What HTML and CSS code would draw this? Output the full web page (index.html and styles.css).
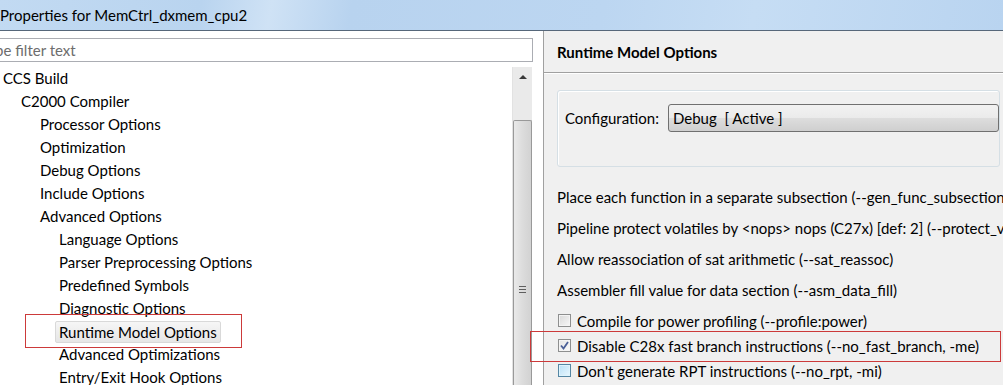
FILE: index.html
```html
<!DOCTYPE html>
<html lang="en">
<head>
    <meta charset="UTF-8">
    <title>Properties for MemCtrl_dxmem_cpu2</title>
    <link rel="stylesheet" href="styles.css">
</head>
<body>
    <div class="window">
        <div class="titlebar">Properties for MemCtrl_dxmem_cpu2</div>

        <div class="content">
            <div class="nav">
                <div class="filter">type filter text</div>

                <div class="tree-wrap">
                    <ul class="tree">
                        <li class="lvl1">CCS Build</li>
                        <li class="lvl2">C2000 Compiler</li>
                        <li class="lvl3">Processor Options</li>
                        <li class="lvl3">Optimization</li>
                        <li class="lvl3">Debug Options</li>
                        <li class="lvl3">Include Options</li>
                        <li class="lvl3">Advanced Options</li>
                        <li class="lvl4">Language Options</li>
                        <li class="lvl4">Parser Preprocessing Options</li>
                        <li class="lvl4">Predefined Symbols</li>
                        <li class="lvl4">Diagnostic Options</li>
                        <li class="lvl4"><span class="selected">Runtime Model Options</span></li>
                        <li class="lvl4">Advanced Optimizations</li>
                        <li class="lvl4">Entry/Exit Hook Options</li>
                    </ul>

                    <div class="scrollbar">
                        <div class="scroll-up"></div>
                        <div class="thumb"><span class="grip"></span></div>
                    </div>
                </div>
            </div>

            <div class="page">
                <div class="page-title">Runtime Model Options</div>

                <div class="config-group">
                    <span class="config-label">Configuration:</span>
                    <div class="combo">Debug&nbsp; [ Active ]</div>
                </div>

                <div class="options">
                    <div class="opt-label">Place each function in a separate subsection (--gen_func_subsections)</div>
                    <div class="opt-label">Pipeline protect volatiles by &lt;nops&gt; nops (C27x) [def: 2] (--protect_volatile)</div>
                    <div class="opt-label">Allow reassociation of sat arithmetic (--sat_reassoc)</div>
                    <div class="opt-label">Assembler fill value for data section (--asm_data_fill)</div>

                    <label class="opt-check first">
                        <span class="box"></span>
                        Compile for power profiling (--profile:power)
                    </label>
                    <label class="opt-check">
                        <span class="box checked">
                            <svg width="9" height="9" viewBox="0 0 9 9"><path d="M1 4.5 L3.5 7.5 L8 1" fill="none" stroke="#4a5f97" stroke-width="1.8"/></svg>
                        </span>
                        Disable C28x fast branch instructions (--no_fast_branch, -me)
                    </label>
                    <label class="opt-check">
                        <span class="box hover"></span>
                        Don't generate RPT instructions (--no_rpt, -mi)
                    </label>
                </div>
            </div>
        </div>

        <!-- red annotation boxes drawn over the dialog -->
        <div class="mark mark-tree"></div>
        <div class="mark mark-option"></div>
    </div>
</body>
</html>
```

FILE: styles.css
```css
* {
    margin: 0;
    padding: 0;
    box-sizing: border-box;
}

body {
    width: 1003px;
    height: 385px;
    overflow: hidden;
    background-color: #f0f0f0;
    color: #000000;
    font-family: 'Lato', 'Open Sans', sans-serif;
    font-size: 15px;
}

.window {
    position: relative;
    width: 1003px;
    height: 385px;
    overflow: hidden;
}

.titlebar {
    height: 31px;
    line-height: 31px;
    border-bottom: 1px solid #56677a;
    background: linear-gradient(100deg, #c2daf2 0%, #b9d4ef 20%, #cfe2f5 27%, #b8d3ef 35%, #bcd6f1 60%, #c6ddf4 75%, #b9d4f0 100%);
}

.content {
    display: flex;
    height: 354px;
}

/* left side: filter + tree */
.nav {
    width: 544px;
    background-color: #ffffff;
    border-right: 1px solid #a0a0a0;
    overflow: hidden;
}

.filter {
    margin-top: 7px;
    margin-left: -20px;
    width: 553px;
    height: 24px;
    line-height: 22px;
    padding-left: 1px;
    border: 1px solid #abadb3;
    color: #6d6d6d;
}

.tree-wrap {
    display: flex;
    margin-top: 5px;
    height: 330px;
}

.tree {
    flex: 1;
    list-style: none;
}

.tree li {
    height: 23px;
    line-height: 23px;
    white-space: nowrap;
}

.tree .lvl1 { padding-left: 3px; }
.tree .lvl2 { padding-left: 21px; }
.tree .lvl3 { padding-left: 40px; }
.tree .lvl4 { padding-left: 59px; }

.selected {
    display: inline-block;
    height: 22px;
    line-height: 20px;
    margin-top: 1px;
    margin-left: -4px;
    padding: 0 3px;
    border: 1px solid #d9d9d9;
    border-radius: 2px;
    background: linear-gradient(#f6f6f6, #e6e6e6);
}

.scrollbar {
    width: 20px;
    margin-right: 11px;
    background-color: #eaeaea;
    border-left: 1px solid #e2e2e2;
    display: flex;
    flex-direction: column;
}

.scroll-up {
    height: 53px;
    position: relative;
}

.scroll-up::after {
    content: '';
    position: absolute;
    left: 6px;
    top: 8px;
    border-left: 4px solid transparent;
    border-right: 4px solid transparent;
    border-bottom: 4px solid #3a3a3a;
}

.thumb {
    flex: 1;
    border: 1px solid #999999;
    border-bottom: none;
    border-radius: 2px 2px 0 0;
    background: linear-gradient(to right, #e9e9e9, #dcdcdc 50%, #d2d2d2);
    display: flex;
    justify-content: center;
    padding-top: 165px;
}

.grip {
    width: 7px;
    height: 7px;
    border-top: 1px solid #5e5e5e;
    border-bottom: 1px solid #5e5e5e;
    position: relative;
}

.grip::after {
    content: '';
    position: absolute;
    left: 0;
    right: 0;
    top: 2px;
    border-top: 1px solid #5e5e5e;
}

/* right side: property page */
.page {
    flex: 1;
    padding-left: 13px;
    padding-right: 3px;
    white-space: nowrap;
    overflow: hidden;
}

.page-title {
    height: 42px;
    line-height: 42px;
    font-weight: 700;
    margin-left: -13px;
    padding-left: 13px;
    margin-right: -3px;
    border-bottom: 1px solid #a0a0a0;
    box-shadow: 0 1px 0 #ffffff;
}

.config-group {
    display: flex;
    align-items: center;
    gap: 9px;
    margin-top: 17px;
    height: 77px;
    padding: 0 0 22px 7px;
    border: 1px solid #d5dfe5;
    border-radius: 3px;
    box-shadow: inset 1px 1px 0 #ffffff;
}

.combo {
    flex: 1;
    height: 28px;
    line-height: 26px;
    padding-left: 4px;
    border: 1px solid #707070;
    border-radius: 3px;
    background: linear-gradient(#f2f2f2 0%, #ebebeb 48%, #dddddd 52%, #cfcfcf 100%);
}

.options {
    margin-top: 15px;
}

.opt-label {
    height: 31px;
    line-height: 31px;
}

.opt-check {
    display: flex;
    align-items: center;
    gap: 6px;
    height: 25px;
    padding-left: 1px;
}

.opt-check.first {
    margin-top: 2px;
}

.box {
    width: 13px;
    height: 13px;
    border: 1px solid #8e8f8f;
    background: linear-gradient(135deg, #d9d9d9, #f7f7f7);
    box-shadow: inset 0 0 0 1px #f4f4f4;
    display: flex;
    align-items: center;
    justify-content: center;
}

.box.checked {
    background: linear-gradient(135deg, #e4e4e4, #fafafa);
}

.box.hover {
    border-color: #5586a3;
    background: linear-gradient(135deg, #b9e0f6, #e9f7fe);
    box-shadow: inset 0 0 0 1px #def4fd;
}

/* annotation rectangles */
.mark {
    position: absolute;
    border: 1px solid #cc3a3a;
}

.mark-tree {
    left: 25px;
    top: 314px;
    width: 217px;
    height: 34px;
}

.mark-option {
    left: 530px;
    top: 331px;
    width: 471px;
    height: 31px;
}
```
